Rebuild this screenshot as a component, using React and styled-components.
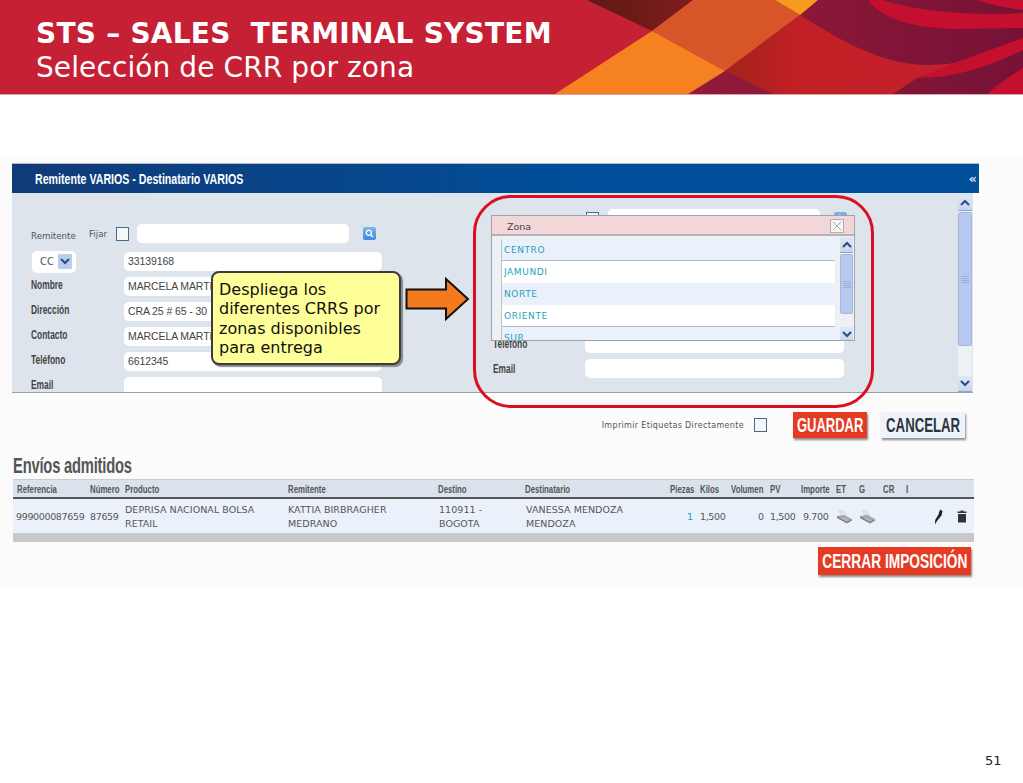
import React from "react";
import styled, { createGlobalStyle } from "styled-components";

const Global = createGlobalStyle`
  html, body { margin: 0; padding: 0; background: #fff; }
  body { font-family: "Liberation Sans", Arial, sans-serif; width: 1023px; height: 783px; overflow: hidden; }
`;
const sans = `"Liberation Sans", Arial, sans-serif`;
const dejavu = `"DejaVu Sans", Verdana, sans-serif`;

const Cond = styled.span`
  display: inline-block; flex: none; white-space: nowrap;
  transform: scaleX(${p => p.$x});
  transform-origin: ${p => p.$center ? "center" : "left center"};
`;

const Slide = styled.div`width: 1023px; height: 783px; position: relative; display: flex; flex-direction: column;`;
const Banner = styled.header`
  height: 77px; background: #c62035; border-bottom: 1px solid #e0a0a8; position: relative; overflow: hidden;
  padding: 17px 0 0 36px; margin-bottom: 63px; flex: none;
`;
const BannerArt = styled.svg`position: absolute; right: 0; top: 0; width: 1023px; height: 94px;`;
const BannerTitle = styled.h1`
  position: relative; margin: 0; font: bold 28px/33px ${dejavu}; letter-spacing: .25px; color: #fff; white-space: pre;
`;
const BannerSub = styled.h2`
  position: relative; margin: 0; font: normal 28px/35px ${dejavu}; letter-spacing: .1px; color: #fff; white-space: pre;
`;

const Screen = styled.section`height: 429px; background: #fbfbfb; padding: 6px 0 0 12px; box-sizing: border-box; flex: none; position: relative;`;
const TitleBar = styled.div`
  width: 967px; height: 29px; background: linear-gradient(90deg, #103a78, #004f9a 60%); box-sizing: border-box; padding: 0 0 0 23px;
  display: flex; align-items: center; justify-content: space-between; color: #fff;
  font: bold 14px ${sans}; box-shadow: 0 -1px 0 #bbb;
`;
const Collapse = styled.span`font: bold 13px ${dejavu}; padding: 0 2px 0 0; color: #dde;`;
const FormPanel = styled.div`
  width: 961px; height: 200px; background: #dde4ec; border-bottom: 1px solid #a0a0a0; box-sizing: border-box; position: relative; overflow: hidden;
  display: flex;
`;
const Col = styled.div`width: ${p => p.$w}px; padding: ${p => p.$pt}px 0 0 ${p => p.$pl}px; box-sizing: border-box; flex: none; display: flex; flex-direction: column;`;
const Row = styled.div`display: flex; align-items: center; height: ${p => p.$h || 25}px; flex: none; margin-top: ${p => p.$mt || 0}px;`;
const Label = styled.span`
  width: ${p => p.$w || 93}px; flex: none; font: bold 12px ${sans}; color: #444; padding-bottom: ${p => p.$flat ? 0 : 4}px;
`;
const SmallLabel = styled.span`
  font: 8.7px ${dejavu}; color: #555; width: ${p => p.$w}px; flex: none; padding-top: ${p => p.$pt || 0}px;
`;
const Field = styled.div`
  width: ${p => p.$w}px; height: ${p => p.$h || 19}px; background: #fff; border-radius: 5px; box-sizing: border-box; flex: none;
  padding: 0 4px; font: 10.5px/19px ${sans}; letter-spacing: -.1px; color: #444; overflow: hidden; white-space: nowrap; margin-left: ${p => p.$ml || 0}px;
`;
const Check = styled.span`
  width: 11px; height: 12px; border: 1px solid #4a6a8a; background: #f4f7f4; flex: none; display: block; margin-left: ${p => p.$ml || 0}px;
`;
const SearchBtn = styled.span`
  width: 13px; height: 13px; border-radius: 2px; background: linear-gradient(#7db5ea, #3f8ade); flex: none; margin-left: ${p => p.$ml}px; display: flex; align-items: center; justify-content: center;
`;
const SelectBox = styled.div`
  width: 44px; height: 22px; background: #fff; border-radius: 5px; display: flex; align-items: center; justify-content: space-between; padding: 0 4px 0 8px; box-sizing: border-box; font: 10px ${dejavu}; color: #555; margin: 0 48px 0 1px;
`;
const ArrowBtn = styled.span`
  width: 14px; height: 15px; background: #b9cdec; border-radius: 1px; display: flex; align-items: center; justify-content: center; flex: none;
`;
const Scroll = styled.div`
  position: absolute; left: ${p => p.$l}px; top: ${p => p.$t}px; width: ${p => p.$wd}px; height: ${p => p.$ht}px; display: flex; flex-direction: column; background: #eef1f4;
`;
const ScrollEnd = styled.span`
  height: 15px; background: linear-gradient(#dfe8f7, #c6d6ef); display: flex; align-items: center; justify-content: center; flex: none; box-shadow: 0 1px 0 #8fa3c8;
`;
const ScrollThumb = styled.div`
  height: ${p => p.$h}px; margin-top: 2px; background: #b7c9ee; border: 1px solid #a3b7df; border-radius: 2px; box-sizing: border-box; display: flex; align-items: center; justify-content: center; flex: none;
  &::after { content: ""; width: 8px; height: 7px; background: repeating-linear-gradient(#9db2da 0 1px, transparent 1px 2px); }
`;
const Spacer = styled.div`flex: 1;`;

const Actions = styled.div`
  width: 953px; display: flex; align-items: center; justify-content: flex-end; margin-top: 19px; height: 26px;
`;
const PrintLabel = styled.span`font: 8px ${dejavu}; color: #555; letter-spacing: .35px; margin-right: 10px;`;
const BigBtn = styled.button`
  border: 0; height: ${p => p.$h || 26}px; width: ${p => p.$w}px; padding: 0; margin-left: ${p => p.$ml || 0}px;
  background: ${p => p.$light ? "#eef3fa" : "#e63a22"}; color: ${p => p.$light ? "#2c3440" : "#fff"};
  font: bold ${p => p.$fs || 20}px ${sans}; box-shadow: 1px 2px 2px rgba(0,0,0,.45); flex: none;
  display: flex; align-items: center; justify-content: center; overflow: visible;
`;

const Heading = styled.h3`
  margin: 16px 0 0 1px; height: 24px; font: bold 22px/24px ${sans}; color: #555; letter-spacing: -.3px;
`;
const cols = "73px 35px 163px 150px 87px 145px 30px 31px 39px 31px 35px 23px 24px 23px 28px 23px 1fr";
const Table = styled.div`width: 961px; margin: 1px 0 0 1px;`;
const HeadRow = styled.div`
  display: grid; grid-template-columns: ${cols}; height: 20px; background: #dae3ec; border-top: 1px solid #c4ccd4; border-bottom: 2px solid #555; box-sizing: border-box; align-items: center; padding-left: 4px;
  font: bold 11px ${sans}; color: #555;
`;
const BodyRow = styled.div`
  display: grid; grid-template-columns: ${cols}; height: 34px; background: #ebf1fb; align-items: center; padding: 2px 0 0 4px; box-sizing: border-box;
  font: 9.5px/14px ${dejavu}; color: #555; letter-spacing: .05px;
`;
const Cell = styled.span`
  text-align: ${p => p.$r ? "right" : "left"}; padding-right: ${p => p.$r || 0}px; color: ${p => p.$link ? "#1e9fc0" : "inherit"}; white-space: nowrap;
  margin-left: ${p => p.$ml || 0}px; letter-spacing: ${p => p.$num ? "-.35px" : "inherit"};
`;
const IconCell = styled.span`display: flex; margin-top: ${p => p.$mt || 0}px;`;
const TableFoot = styled.div`height: 9px; background: #c8c8c8;`;
const CloseRow = styled.div`width: 959px; display: flex; justify-content: flex-end; margin-top: 5px;`;

const PageNum = styled.span`position: absolute; left: 985px; top: 753px; font: 13px ${dejavu}; color: #222;`;

const Ring = styled.div`
  position: absolute; left: 473px; top: 195px; width: 401px; height: 213px; box-sizing: border-box; border: 3px solid #dc0f1e; border-radius: 38px; pointer-events: none;
`;
const Callout = styled.div`
  position: absolute; left: 211px; top: 271px; width: 190px; height: 94px; box-sizing: border-box; background: #ffff99; border: 2px solid #3c3c3c; border-radius: 8px; box-shadow: 2px 2px 1px #888;
  padding: 7px 0 0 6px; font: 16px/19.4px ${dejavu}; color: #111;
`;
const ArrowArt = styled.svg`position: absolute; left: 405px; top: 277px; width: 66px; height: 44px;`;

const Popup = styled.div`
  position: absolute; left: 491px; top: 215px; width: 364px; height: 126px; background: #eef1f4; border: 1px solid #a0a4a8; box-sizing: border-box; overflow: hidden;
`;
const PopupHead = styled.div`
  background: #f3d6da; border-bottom: 2px solid #b4b4b4; display: flex; align-items: center; justify-content: space-between; padding: 2px 10px 0 15px; height: 16px;
  font: 9.5px ${dejavu}; color: #444;
`;
const CloseBox = styled.span`width: 12px; height: 12px; background: #f4f4f4; border: 1px solid #b0b0b0; display: flex; align-items: center; justify-content: center;`;
const PopupBody = styled.div`display: flex; padding: 3px 0 0 9px; height: 106px; position: relative;`;
const List = styled.ul`list-style: none; margin: 0; padding: 0; width: 333px; border-left: 1px solid #c0c4c8; overflow: hidden; flex: none;`;
const Item = styled.li`
  height: ${p => p.$h || 22}px; box-sizing: border-box; background: ${p => p.$alt ? "#ebf1fb" : "#fff"}; border-bottom: ${p => p.$line ? "1px solid #b4bcc8" : "0"};
  font: 9px/22px ${dejavu}; letter-spacing: .6px; color: #1e9fc0; padding-left: 2px;
`;

const Chevron = ({ up }) => (
  <svg width="10" height="7" viewBox="0 0 10 7"><path d={up ? "M1 6 L5 2 L9 6" : "M1 1 L5 5 L9 1"} fill="none" stroke="#2d4a80" strokeWidth="2" /></svg>
);
const Printer = () => (
  <svg width="17" height="14" viewBox="0 0 17 14">
    <path d="M3 1 L7 0.5 L11 6 L7 7 Z" fill="#e6e6e6" stroke="#c4c4c4" strokeWidth=".6" />
    <path d="M1 6 L8 5 L16 9 L11 11.5 Z" fill="#a2a6a8" />
    <path d="M1 6 L11 11.5 L16 9 L16 10.5 L11 13.5 L1 8 Z" fill="#7b8084" />
    <path d="M5 8 L11 11 M7 7.4 L12.5 10.4" stroke="#d0d2d4" strokeWidth=".5" />
  </svg>
);
const Pen = () => (
  <svg width="9" height="16" viewBox="0 0 9 16"><path d="M6 0.5 L8.5 2 L7.5 6.5 L3 12 L1 15.5 L1.2 11 L4.5 5.5 Z" fill="#222" /></svg>
);
const Trash = () => (
  <svg width="10" height="13" viewBox="0 0 10 13"><path d="M3.5 0.5 H6.5 V1.5 H9.5 V3 H0.5 V1.5 H3.5 Z M1 4 H9 V12.5 H1 Z" fill="#333" /></svg>
);
const Magnifier = () => (
  <svg width="9" height="9" viewBox="0 0 9 9"><circle cx="3.8" cy="3.8" r="2.6" fill="none" stroke="#fff" strokeWidth="1.3" /><path d="M5.8 5.8 L8 8" stroke="#fff" strokeWidth="1.4" /></svg>
);

const Art = () => (
  <BannerArt viewBox="0 0 1023 94" preserveAspectRatio="none">
    <defs>
      <linearGradient id="dk" x1="0" x2="1"><stop offset="0" stopColor="#5e1a14" /><stop offset="1" stopColor="#7e1c1e" /></linearGradient>
      <linearGradient id="rd" x1="0" x2="1"><stop offset="0" stopColor="#a3221c" /><stop offset=".3" stopColor="#c22026" /><stop offset="1" stopColor="#c4202c" /></linearGradient>
      <linearGradient id="pl" x1="0" x2="1"><stop offset="0" stopColor="#941a3a" /><stop offset="1" stopColor="#761236" /></linearGradient>
    </defs>
    <path d="M760 0 H1023 V94 H688 L725 71 Z" fill="url(#pl)" />
    <path d="M587 0 L693 0 L652 31 Z" fill="url(#dk)" />
    <path d="M652 31 L693 0 L775 0 L800 15 L725 71 Z" fill="#d6562a" />
    <path d="M775 0 L818 0 L800 15 Z" fill="#f79b1e" />
    <path d="M652 31 L555 94 L688 94 L725 71 Z" fill="#f68121" />
    <path d="M800 15 C840 40 880 64 925 65 C940 65 955 64 968 60 L917 78 L893 94 L773 94 L725 71 Z" fill="url(#rd)" />
    <path d="M917 78 C950 64 990 50 1023 38 L1023 50 C990 66 955 78 917 78 Z" fill="#c4102e" />
    <path d="M868 0 C880 16 905 28 957 29 C980 29 1000 28 1023 28 L1023 13 C985 15 925 14 883 0 Z" fill="#c4102e" />
    <path d="M977 0 C990 4 1005 8 1023 10 L1023 0 Z" fill="#c4102e" />
    <path d="M987 94 C998 84 1012 75 1023 68 L1023 94 Z" fill="#c4102e" />
  </BannerArt>
);

const Admitidos = ["Referencia","Número","Producto","Remitente","Destino","Destinatario","Piezas","Kilos","Volumen","PV","Importe","ET","G","CR","I"];

export default function App() {
  return (
    <Slide>
      <Global />
      <Banner>
        <Art />
        <BannerTitle>STS – SALES  TERMINAL SYSTEM</BannerTitle>
        <BannerSub>Selección de CRR por zona</BannerSub>
      </Banner>
      <Screen>
        <TitleBar><Cond $x={0.76}>Remitente VARIOS - Destinatario VARIOS</Cond><Collapse>«</Collapse></TitleBar>
        <FormPanel>
          <Col $w={480} $pt={31} $pl={19}>
            <Row $h={19}>
              <SmallLabel $w={58} $pt={4}>Remitente</SmallLabel><SmallLabel $w={27}>Fijar</SmallLabel><Check />
              <Field $w={212} $ml={8} /><SearchBtn $ml={14}><Magnifier /></SearchBtn>
            </Row>
            <Row $h={25} $mt={6}>
              <SelectBox>CC<ArrowBtn><Chevron /></ArrowBtn></SelectBox><Field $w={258}>33139168</Field>
            </Row>
            <Row><Label><Cond $x={0.7}>Nombre</Cond></Label><Field $w={258}>MARCELA MARTINEZ</Field></Row>
            <Row><Label><Cond $x={0.7}>Dirección</Cond></Label><Field $w={258}>CRA 25 # 65 - 30</Field></Row>
            <Row><Label><Cond $x={0.7}>Contacto</Cond></Label><Field $w={258}>MARCELA MARTINEZ</Field></Row>
            <Row><Label><Cond $x={0.7}>Teléfono</Cond></Label><Field $w={258}>6612345</Field></Row>
            <Row><Label><Cond $x={0.7}>Email</Cond></Label><Field $w={258} /></Row>
          </Col>
          <Col $w={470} $pt={16} $pl={1}>
            <Row $h={19}>
              <Check $ml={93} /><Field $w={212} $ml={9} /><SearchBtn $ml={14}><Magnifier /></SearchBtn>
            </Row>
            <Row $h={103} />
            <Row $h={25}><Label $w={92} $flat><Cond $x={0.7}>Teléfono</Cond></Label><Field $w={259} /></Row>
            <Row $h={25}><Label $w={92} $flat><Cond $x={0.7}>Email</Cond></Label><Field $w={259} /></Row>
          </Col>
          <Scroll $l={946} $t={2} $wd={14} $ht={196}>
            <ScrollEnd><Chevron up /></ScrollEnd>
            <ScrollThumb $h={134} />
            <Spacer />
            <ScrollEnd><Chevron /></ScrollEnd>
          </Scroll>
        </FormPanel>
        <Actions>
          <PrintLabel>Imprimir Etiquetas Directamente</PrintLabel>
          <Check />
          <BigBtn $w={74} $ml={26}><Cond $x={0.65} $center>GUARDAR</Cond></BigBtn>
          <BigBtn $w={84} $ml={14} $light><Cond $x={0.66} $center>CANCELAR</Cond></BigBtn>
        </Actions>
        <Heading><Cond $x={0.67}>Envíos admitidos</Cond></Heading>
        <Table>
          <HeadRow>{Admitidos.map(h => <span key={h}><Cond $x={0.71}>{h}</Cond></span>)}</HeadRow>
          <BodyRow>
            <Cell $num $ml={-1}>999000087659</Cell><Cell $num>87659</Cell>
            <Cell>DEPRISA NACIONAL BOLSA<br />RETAIL</Cell>
            <Cell>KATTIA BIRBRAGHER<br />MEDRANO</Cell>
            <Cell $ml={1}>110911 -<br />BOGOTA</Cell>
            <Cell $ml={1}>VANESSA MENDOZA<br />MENDOZA</Cell>
            <Cell $r={7} $link>1</Cell><Cell $num>1,500</Cell><Cell $r={6}>0</Cell><Cell $num>1,500</Cell><Cell $num $ml={2}>9.700</Cell>
            <IconCell><Printer /></IconCell><IconCell><Printer /></IconCell><span /><span /><IconCell><Pen /></IconCell><IconCell $mt={-2}><Trash /></IconCell>
          </BodyRow>
          <TableFoot />
        </Table>
        <CloseRow><BigBtn $w={153} $h={28} $fs={21}><Cond $x={0.655} $center>CERRAR IMPOSICIÓN</Cond></BigBtn></CloseRow>
      </Screen>
      <Ring />
      <Popup>
        <PopupHead>Zona<CloseBox><svg width="10" height="10" viewBox="0 0 10 10"><path d="M1 1 L9 9 M9 1 L1 9" stroke="#aaa" strokeWidth="1" /></svg></CloseBox></PopupHead>
        <PopupBody>
          <List>
            <Item $alt $line>CENTRO</Item>
            <Item>JAMUNDI</Item>
            <Item $alt>NORTE</Item>
            <Item $line>ORIENTE</Item>
            <Item $alt>SUR</Item>
          </List>
          <Scroll $l={348} $t={1} $wd={13} $ht={105}>
            <ScrollEnd><Chevron up /></ScrollEnd>
            <ScrollThumb $h={60} />
            <Spacer />
            <ScrollEnd><Chevron /></ScrollEnd>
          </Scroll>
        </PopupBody>
      </Popup>
      <ArrowArt viewBox="0 0 66 44"><path d="M1.5 12.5 H41 V2 L63 22 L41 42 V31.5 H1.5 Z" fill="#f47a20" stroke="#111" strokeWidth="2" /></ArrowArt>
      <Callout>Despliega los<br />diferentes CRRS por<br />zonas disponibles<br />para entrega</Callout>
      <PageNum>51</PageNum>
    </Slide>
  );
}
